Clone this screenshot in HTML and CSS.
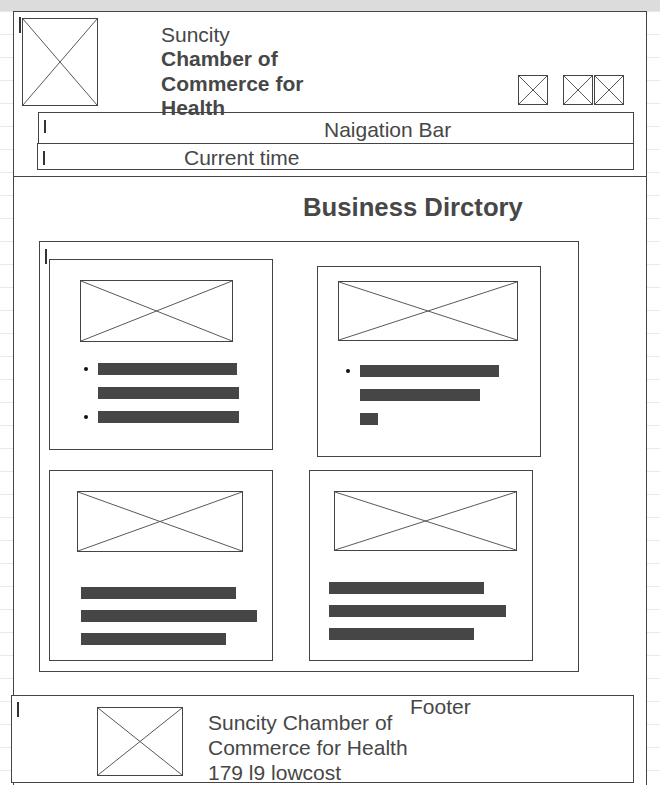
FILE: index.html
```html
<!DOCTYPE html>
<html lang="en">
<head>
    <meta charset="UTF-8">
    <meta name="viewport" content="width=device-width, initial-scale=1.0">
    <title>Suncity Chamber of Commerce for Health</title>
    <link rel="stylesheet" href="styles.css">
</head>
<body>
    <div class="topbar"></div>
    <div class="page">
        <header class="header">
            <div class="brand-row">
                <span class="caret caret-brand"></span>
                <div class="ph logo">
                    <svg viewBox="0 0 100 100" preserveAspectRatio="none"><path d="M0 0L100 100M100 0L0 100"/></svg>
                </div>
                <div class="brand-name">
                    <div>Suncity</div>
                    <strong>Chamber of Commerce for Health</strong>
                </div>
                <div class="social">
                    <div class="ph icon"><svg viewBox="0 0 100 100" preserveAspectRatio="none"><path d="M0 0L100 100M100 0L0 100"/></svg></div>
                    <div class="ph icon icon-2"><svg viewBox="0 0 100 100" preserveAspectRatio="none"><path d="M0 0L100 100M100 0L0 100"/></svg></div>
                    <div class="ph icon icon-3"><svg viewBox="0 0 100 100" preserveAspectRatio="none"><path d="M0 0L100 100M100 0L0 100"/></svg></div>
                </div>
            </div>
            <nav class="navbar">
                <span class="caret caret-nav"></span>
                <span class="nav-label">Naigation Bar</span>
            </nav>
            <div class="clock">
                <span class="caret caret-clock"></span>
                <span class="clock-label">Current time</span>
            </div>
        </header>

        <main>
            <h1 class="dir-title">Business Dirctory</h1>
            <section class="directory">
                <span class="caret caret-dir"></span>
                <div class="row row-1">
                    <div class="card card-1">
                        <div class="ph card-img"><svg viewBox="0 0 100 100" preserveAspectRatio="none"><path d="M0 0L100 100M100 0L0 100"/></svg></div>
                        <ul class="lines">
                            <li class="dot"><span class="bar" style="width:139px"></span></li>
                            <li><span class="bar" style="width:141px"></span></li>
                            <li class="dot"><span class="bar" style="width:141px"></span></li>
                        </ul>
                    </div>
                    <div class="card card-2">
                        <div class="ph card-img"><svg viewBox="0 0 100 100" preserveAspectRatio="none"><path d="M0 0L100 100M100 0L0 100"/></svg></div>
                        <ul class="lines">
                            <li class="dot"><span class="bar" style="width:139px"></span></li>
                            <li><span class="bar" style="width:120px"></span></li>
                            <li><span class="bar" style="width:18px"></span></li>
                        </ul>
                    </div>
                </div>
                <div class="row row-2">
                    <div class="card card-3">
                        <div class="ph card-img"><svg viewBox="0 0 100 100" preserveAspectRatio="none"><path d="M0 0L100 100M100 0L0 100"/></svg></div>
                        <ul class="lines">
                            <li><span class="bar" style="width:155px"></span></li>
                            <li><span class="bar" style="width:176px"></span></li>
                            <li><span class="bar" style="width:145px"></span></li>
                        </ul>
                    </div>
                    <div class="card card-4">
                        <div class="ph card-img"><svg viewBox="0 0 100 100" preserveAspectRatio="none"><path d="M0 0L100 100M100 0L0 100"/></svg></div>
                        <ul class="lines">
                            <li><span class="bar" style="width:155px"></span></li>
                            <li><span class="bar" style="width:177px"></span></li>
                            <li><span class="bar" style="width:145px"></span></li>
                        </ul>
                    </div>
                </div>
            </section>
        </main>

        <footer class="footer">
            <span class="caret caret-footer"></span>
            <span class="footer-label">Footer</span>
            <div class="ph footer-logo"><svg viewBox="0 0 100 100" preserveAspectRatio="none"><path d="M0 0L100 100M100 0L0 100"/></svg></div>
            <div class="footer-text">
                Suncity Chamber of<br>
                Commerce for Health<br>
                179 l9 lowcost
            </div>
        </footer>
    </div>
</body>
</html>
```

FILE: styles.css
```css
* {
    box-sizing: border-box;
}
body {
    margin: 0;
    font-family: "Liberation Sans", Arial, sans-serif;
    color: #474747;
    background: #fff linear-gradient(to bottom, transparent 22px, #e9e9e9 22px) 0 12px / 100% 23px;
}
.topbar {
    height: 11px;
    background-color: #dcdcdc;
}
.page {
    width: 634px;
    min-height: 774px;
    margin-left: 13px;
    background-color: #fff;
    border: 1px solid #444;
    border-bottom: none;
}

/* wireframe placeholders */
.ph {
    border: 1px solid #444;
    background-color: #fff;
}
.ph svg {
    display: block;
    width: 100%;
    height: 100%;
}
.ph path {
    stroke: #585858;
    stroke-width: 1;
    fill: none;
    vector-effect: non-scaling-stroke;
}
.caret {
    position: absolute;
    left: 5px;
    width: 2px;
    height: 15px;
    background-color: #333;
}

/* header */
.header {
    border-bottom: 1px solid #444;
    padding-bottom: 6px;
}
.brand-row {
    position: relative;
    display: flex;
    align-items: flex-start;
    height: 100px;
}
.caret-brand {
    top: 5px;
    height: 16px;
}
.logo {
    width: 76px;
    height: 88px;
    margin: 6px 0 0 8px;
}
.brand-name {
    width: 150px;
    margin: 11px 0 0 63px;
    font-size: 21px;
    line-height: 24.3px;
}
.social {
    display: flex;
    margin: 63px 22px 0 auto;
}
.icon {
    width: 30px;
    height: 30px;
}
.icon-2 {
    margin-left: 15px;
}
.icon-3 {
    margin-left: 1px;
}
.navbar {
    position: relative;
    width: 596px;
    height: 32px;
    margin-left: 24px;
    padding: 3px 0 0 285px;
    border: 1px solid #444;
    font-size: 21px;
    line-height: 28px;
}
.caret-nav {
    top: 7px;
    height: 13px;
}
.clock {
    position: relative;
    width: 597px;
    height: 27px;
    margin: -1px 0 0 23px;
    padding: 2px 0 0 146px;
    border: 1px solid #444;
    font-size: 21px;
    line-height: 24px;
}
.caret-clock {
    top: 7px;
    height: 14px;
}

/* directory */
.dir-title {
    margin: 15px 0 18px;
    padding-left: 289px;
    font-size: 25.7px;
    line-height: 31px;
    font-weight: bold;
}
.directory {
    position: relative;
    width: 540px;
    margin-left: 25px;
    padding: 17px 0 10px 9px;
    border: 1px solid #444;
}
.caret-dir {
    top: 7px;
}
.row {
    display: flex;
    align-items: flex-start;
}
.row-2 {
    margin-top: 13px;
}
.card {
    width: 224px;
    height: 191px;
    border: 1px solid #444;
}
.card-2 {
    margin: 7px 0 0 44px;
}
.card-4 {
    margin-left: 36px;
}
.lines {
    list-style: none;
    margin: 0;
    padding: 0;
}
.lines li {
    position: relative;
    height: 12px;
    margin-top: 12px;
}
.lines li:first-child {
    margin-top: 0;
}
.lines li.dot::before {
    content: "";
    position: absolute;
    left: -14px;
    top: 4px;
    width: 4px;
    height: 4px;
    border-radius: 50%;
    background-color: #111;
}
.bar {
    display: block;
    height: 12px;
    background-color: #464646;
}
.card-1 .card-img {
    width: 153px;
    height: 62px;
    margin: 20px 0 0 30px;
}
.card-1 .lines {
    margin: 21px 0 0 48px;
}
.card-2 .card-img {
    width: 180px;
    height: 60px;
    margin: 14px 0 0 20px;
}
.card-2 .lines {
    margin: 24px 0 0 42px;
}
.card-3 .card-img {
    width: 166px;
    height: 61px;
    margin: 20px 0 0 27px;
}
.card-3 .lines {
    margin: 35px 0 0 31px;
}
.card-4 .card-img {
    width: 183px;
    height: 60px;
    margin: 20px 0 0 24px;
}
.card-4 .lines {
    margin: 31px 0 0 19px;
}
.card-3 .lines li,
.card-4 .lines li {
    margin-top: 11px;
}
.card-3 .lines li:first-child,
.card-4 .lines li:first-child {
    margin-top: 0;
}

/* footer */
.footer {
    position: relative;
    display: flex;
    align-items: flex-start;
    width: 623px;
    height: 88px;
    margin: 23px 0 0 -3px;
    border: 1px solid #444;
    background-color: #fff;
}
.caret-footer {
    top: 6px;
}
.footer-label {
    position: absolute;
    top: -2px;
    left: 398px;
    font-size: 21px;
    line-height: 25px;
}
.footer-logo {
    width: 86px;
    height: 69px;
    margin: 11px 0 0 85px;
}
.footer-text {
    margin: 14px 0 0 25px;
    font-size: 21px;
    line-height: 25px;
}
```
